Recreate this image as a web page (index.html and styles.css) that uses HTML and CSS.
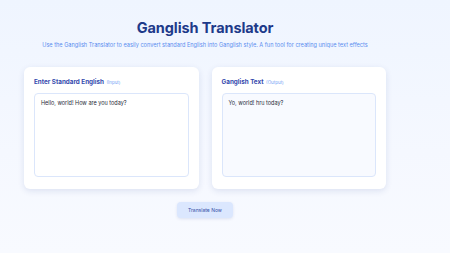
FILE: index.html
```html
<!DOCTYPE html>
<html>
<head>
    <title>Ganglish Translator</title>
    <link rel="stylesheet" href="styles.css">
</head>
<body>
    <div class="page">
        <h1 class="title">Ganglish Translator</h1>
        <p class="subtitle">Use the Ganglish Translator to easily convert standard English into Ganglish style. A fun tool for creating unique text effects</p>

        <div class="panels">
            <div class="card">
                <label class="card-label" for="inputText">Enter Standard English <span class="hint">(Input)</span></label>
                <textarea id="inputText" class="box">Hello, world! How are you today?</textarea>
            </div>
            <div class="card">
                <label class="card-label" for="outputText">Ganglish Text <span class="hint">(Output)</span></label>
                <textarea id="outputText" class="box box-output" readonly>Yo, world! hru today?</textarea>
            </div>
        </div>

        <button type="button" class="translate-btn">Translate Now</button>
    </div>
</body>
</html>
```

FILE: styles.css
```css
body {
    margin: 0;
    height: 253px;
    overflow: hidden;
    font-family: Inter, "Liberation Sans", Arial, sans-serif;
    background: linear-gradient(180deg, #eff5ff 0%, #f5f8ff 60%, #f8faff 100%);
}

.page {
    width: 410px;
    padding: 0 24px;
    box-sizing: border-box;
    display: flex;
    flex-direction: column;
    align-items: center;
}

.title {
    margin: 19px 0 0;
    font-size: 14.5px;
    line-height: 18px;
    font-weight: 700;
    color: #1e3a8a;
    letter-spacing: -0.1px;
}

.subtitle {
    margin: 4px 0 0;
    font-size: 5.6px;
    line-height: 8px;
    color: #5b8def;
    white-space: nowrap;
}

.panels {
    margin-top: 18px;
    width: 100%;
    display: grid;
    grid-template-columns: 1fr 1fr;
    gap: 13px;
}

.card {
    background: #ffffff;
    border-radius: 6px;
    box-shadow: 0 2px 6px rgba(30, 58, 138, 0.12);
    padding: 10px 10px 12px;
    display: flex;
    flex-direction: column;
}

.card-label {
    font-size: 6.3px;
    font-weight: 700;
    color: #3449ad;
    line-height: 10px;
    margin: 0 0 5px;
}

.hint {
    font-size: 4.5px;
    font-weight: 400;
    color: #74a3f5;
    margin-left: 1px;
}

.box {
    height: 84px;
    resize: none;
    border: 1px solid #dbe6fb;
    border-radius: 4px;
    padding: 6px 6px;
    font-family: Inter, "Liberation Sans", Arial, sans-serif;
    font-size: 5.5px;
    color: #1f2937;
    background: #ffffff;
    box-sizing: border-box;
    outline: none;
}

.box-output {
    background: #f8faff;
}

.translate-btn {
    margin-top: 13px;
    width: 56px;
    height: 16px;
    padding: 0;
    border: none;
    border-radius: 4px;
    background: #dbe7fe;
    color: #3550a8;
    font-family: Inter, "Liberation Sans", Arial, sans-serif;
    font-size: 5px;
    box-shadow: 0 1px 3px rgba(30, 58, 138, 0.12);
    cursor: pointer;
}
```
